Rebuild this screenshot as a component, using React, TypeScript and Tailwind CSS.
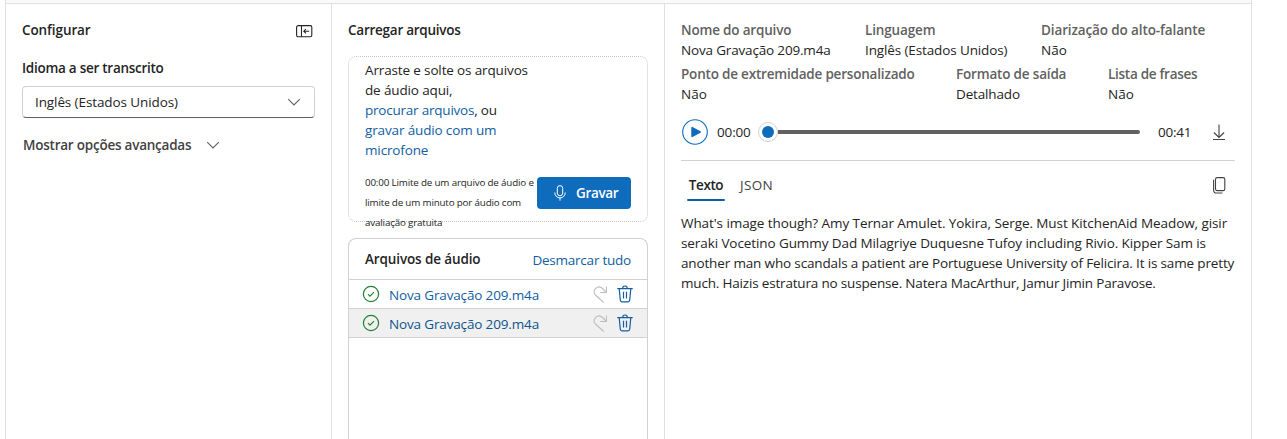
import React from "react";

function ChevronDown() {
  return (
    <svg width="14" height="14" viewBox="0 0 14 14" fill="none" stroke="#616161" strokeWidth="1.1">
      <path d="M1.2 4.2L7 10l5.8-5.8" />
    </svg>
  );
}

function PanelIcon() {
  return (
    <svg width="17" height="13" viewBox="0 0 17 13" fill="none" stroke="#242424" strokeWidth="1.1">
      <rect x="0.6" y="0.6" width="15.2" height="11.2" rx="1.6" />
      <path d="M5.5 0.6v11.2M13.2 6.2H8M9.9 4.1L7.8 6.2l2.1 2.1" />
    </svg>
  );
}

function MicIcon() {
  return (
    <svg width="12" height="16" viewBox="0 0 12 16" fill="none" stroke="#fff" strokeWidth="1">
      <rect x="3.3" y="0.6" width="5.4" height="10.2" rx="2.7" />
      <path d="M0.8 7.5c0 3.3 2.2 5.4 5.2 5.4s5.2-2.1 5.2-5.4M6 12.9v2.8" />
    </svg>
  );
}

function CheckIcon() {
  return (
    <svg width="18" height="18" viewBox="0 0 18 18" fill="none" stroke="#218030" strokeWidth="1.2">
      <circle cx="9" cy="9" r="7.6" />
      <path d="M6 9.2l2 2 4-4" />
    </svg>
  );
}

function RedoIcon() {
  return (
    <svg width="15" height="17" viewBox="0 0 15 17" fill="none" stroke="#bdbdbd" strokeWidth="1.1">
      <path d="M13.4 0.5v6H7.2M13.2 6.3L10 3C7.8 0.7 4.8 0.4 2.7 2.3C0.5 4.3 0.5 7 2.5 9l8.2 7.5" />
    </svg>
  );
}

function TrashIcon() {
  return (
    <svg width="16" height="18" viewBox="0 0 16 18" fill="none" stroke="#115ea3" strokeWidth="1.2">
      <path d="M0.3 3.6h15.4M5.7 3.4c0-3.2 4.6-3.2 4.6 0M2.2 3.8l1.1 11.4c.1 1 .7 1.6 1.7 1.6h6c1 0 1.6-.6 1.7-1.6l1.1-11.4M6.5 6.8v6.6M9.5 6.8v6.6" />
    </svg>
  );
}

function DownloadIcon() {
  return (
    <svg width="12" height="17" viewBox="0 0 12 17" fill="none" stroke="#424242" strokeWidth="1.1">
      <path d="M6 0.5v12.7M0.9 8.5L6 13.4l5.1-4.9M0 15.5h12" />
    </svg>
  );
}

function CopyIcon() {
  return (
    <svg width="13" height="17" viewBox="0 0 13 17" fill="none" stroke="#424242" strokeWidth="1.1">
      <rect x="2.5" y="0.6" width="9.3" height="13" rx="1.7" />
      <path d="M0.6 2.8v10.1c0 2 1.1 3.1 3.1 3.1h5.7" />
    </svg>
  );
}

function PlayIcon() {
  return (
    <svg width="26" height="26" viewBox="0 0 26 26" className="shrink-0">
      <circle cx="13" cy="13" r="12.3" fill="#fff" stroke="#0f6cbd" strokeWidth="1.1" />
      <path d="M9.3 8.6c0-.7.6-1 1.2-.7l8 4.4c.6.3.6 1 0 1.4l-8 4.4c-.6.3-1.2 0-1.2-.7z" fill="#0f6cbd" />
    </svg>
  );
}

function FileRow({ selected }: { selected?: boolean }) {
  return (
    <div className={`flex h-[29px] items-center border-b border-[#d1d1d1] pr-[14px] pl-[13px] ${selected ? "bg-[#f0f0f0]" : ""}`}>
      <CheckIcon />
      <span className={`ml-[9px] pt-[2px] tracking-[-0.15px] ${selected ? "text-[#0f548c]" : "text-[#115ea3]"}`}>Nova Gravação 209.m4a</span>
      <span className="ml-auto"><RedoIcon /></span>
      <span className="ml-[9px]"><TrashIcon /></span>
    </div>
  );
}

interface FieldProps {
  label: string;
  value: string;
  className: string;
  labelClass: string;
  valueClass?: string;
}

function Field({ label, value, className, labelClass, valueClass = "" }: FieldProps) {
  return (
    <div className={`shrink-0 whitespace-nowrap ${className}`}>
      <div className={`font-semibold text-[#616161] ${labelClass}`}>{label}</div>
      <div className={valueClass}>{value}</div>
    </div>
  );
}

export default function App() {
  return (
    <div className="h-[439px] w-full overflow-hidden bg-white font-['Open_Sans','Noto_Sans',sans-serif] text-[13.5px] leading-[20px] text-[#242424]">
      <div className="ml-[5px] flex h-full w-[1247px] flex-col border-x border-[#e0e0e0]">
        <div className="h-[4px] shrink-0 border-b border-[#e0e0e0] bg-[#fafafa]" />
        <div className="flex flex-1">
          <section className="w-[326px] shrink-0 border-r border-[#e0e0e0] pt-[16px] pr-[16px] pl-[16px]">
            <div className="flex h-[20px] items-start justify-between pr-[2px]">
              <h2 className="font-semibold tracking-[-0.1px]">Configurar</h2>
              <span className="pt-[5px]"><PanelIcon /></span>
            </div>
            <h3 className="mt-[18px] font-semibold tracking-[-0.27px]">Idioma a ser transcrito</h3>
            <button className="mt-[8px] flex h-[32px] w-[293px] items-center justify-between rounded-[4px] border border-[#d1d1d1] border-b-[#616161] pr-[13px] pl-[12px]">
              <span className="tracking-[-0.1px]">Inglês (Estados Unidos)</span>
              <ChevronDown />
            </button>
            <button className="mt-[17px] ml-[1px] flex items-center gap-[15px] font-semibold text-[#424242]">
              <span className="tracking-[-0.23px]">Mostrar opções avançadas</span>
              <ChevronDown />
            </button>
          </section>

          <section className="flex w-[333px] shrink-0 flex-col border-r border-[#e0e0e0] pt-[16px] pr-[16px] pl-[16px]">
            <h2 className="font-semibold tracking-[-0.25px]">Carregar arquivos</h2>
            <div className="mt-[16px] h-[166px] shrink-0 rounded-[8px] border border-dotted border-[#c7c7c7] pt-[3px] pl-[16px]">
              <p className="tracking-[-0.14px] whitespace-nowrap">
                Arraste e solte os arquivos<br />
                de áudio aqui,<br />
                <span className="tracking-[-0.22px]"><a className="text-[#115ea3]">procurar arquivos</a>, ou</span><br />
                <a className="text-[#115ea3]">gravar áudio com um<br />microfone</a>
              </p>
              <div className="mt-[12px] flex items-start">
                <p className="w-[172px] shrink-0 pt-[1px] text-[9.8px] leading-[20px] tracking-[-0.17px] whitespace-nowrap">
                  00:00 Limite de um arquivo de áudio e<br />
                  limite de um minuto por áudio com<br />
                  avaliação gratuita
                </p>
                <button className="mt-[5px] flex h-[32px] w-[94px] items-center rounded-[4px] bg-[#0f6cbd] pl-[17px] font-semibold text-white">
                  <MicIcon />
                  <span className="ml-[10px] tracking-[-0.35px]">Gravar</span>
                </button>
              </div>
            </div>
            <div className="mt-[16px] flex-1 rounded-t-[8px] border border-b-0 border-[#d1d1d1]">
              <div className="flex h-[41px] items-center justify-between border-b border-[#d1d1d1] px-[16px]">
                <h3 className="font-semibold tracking-[-0.12px]">Arquivos de áudio</h3>
                <a className="pt-[2px] tracking-[-0.23px] text-[#115ea3]">Desmarcar tudo</a>
              </div>
              <FileRow />
              <FileRow selected />
            </div>
          </section>

          <section className="w-[586px] shrink-0 px-[16px] pt-[16px]">
            <div className="flex">
              <Field className="w-[184px]" label="Nome do arquivo" labelClass="tracking-[-0.18px]" value="Nova Gravação 209.m4a" valueClass="tracking-[-0.17px]" />
              <Field className="w-[176px]" label="Linguagem" labelClass="tracking-[-0.15px]" value="Inglês (Estados Unidos)" valueClass="tracking-[-0.12px]" />
              <Field className="w-[180px]" label="Diarização do alto-falante" labelClass="tracking-[-0.12px]" value="Não" />
            </div>
            <div className="mt-[4px] flex">
              <Field className="w-[275px]" label="Ponto de extremidade personalizado" labelClass="tracking-[-0.2px]" value="Não" />
              <Field className="w-[152px]" label="Formato de saída" labelClass="tracking-[-0.18px]" value="Detalhado" valueClass="tracking-[-0.15px]" />
              <Field className="w-[120px]" label="Lista de frases" labelClass="tracking-[-0.28px]" value="Não" />
            </div>
            <div className="mt-[15px] flex h-[26px] items-center pl-[1px]">
              <PlayIcon />
              <span className="ml-[9px] w-[41px] shrink-0 tracking-[-0.15px]">00:00</span>
              <span className="flex size-[20px] shrink-0 items-center justify-center rounded-full border border-[#d1d1d1] bg-white">
                <span className="size-[12px] rounded-full bg-[#0f6cbd]" />
              </span>
              <span className="h-[4px] w-[362px] shrink-0 rounded-r-[2px] bg-[#616161]" />
              <span className="ml-[18px] w-[55px] shrink-0 tracking-[-0.25px]">00:41</span>
              <DownloadIcon />
            </div>
            <div className="mt-[15px] h-px bg-[#d1d1d1]" />
            <div className="flex h-[40px] items-start pt-[14px] pl-[6px]">
              <div className="flex h-[26px] w-[38px] flex-col items-center justify-between">
                <span className="font-semibold tracking-[-0.4px]">Texto</span>
                <span className="h-[2px] w-full rounded-full bg-[#115ea3]" />
              </div>
              <span className="ml-[15px] tracking-[0.3px] text-[#424242]">JSON</span>
              <span className="mt-[2px] mr-[9px] ml-auto"><CopyIcon /></span>
            </div>
            <p className="mt-[12px] whitespace-nowrap">
              <span className="tracking-[-0.08px]">What's image though? Amy Ternar Amulet. Yokira, Serge. Must KitchenAid Meadow, gisir</span><br />
              <span className="tracking-[-0.09px]">seraki Vocetino Gummy Dad Milagriye Duquesne Tufoy including Rivio. Kipper Sam is</span><br />
              <span className="tracking-[-0.15px]">another man who scandals a patient are Portuguese University of Felicira. It is same pretty</span><br />
              <span className="tracking-[-0.18px]">much. Haizis estratura no suspense. Natera MacArthur, Jamur Jimin Paravose.</span>
            </p>
          </section>
        </div>
      </div>
    </div>
  );
}
